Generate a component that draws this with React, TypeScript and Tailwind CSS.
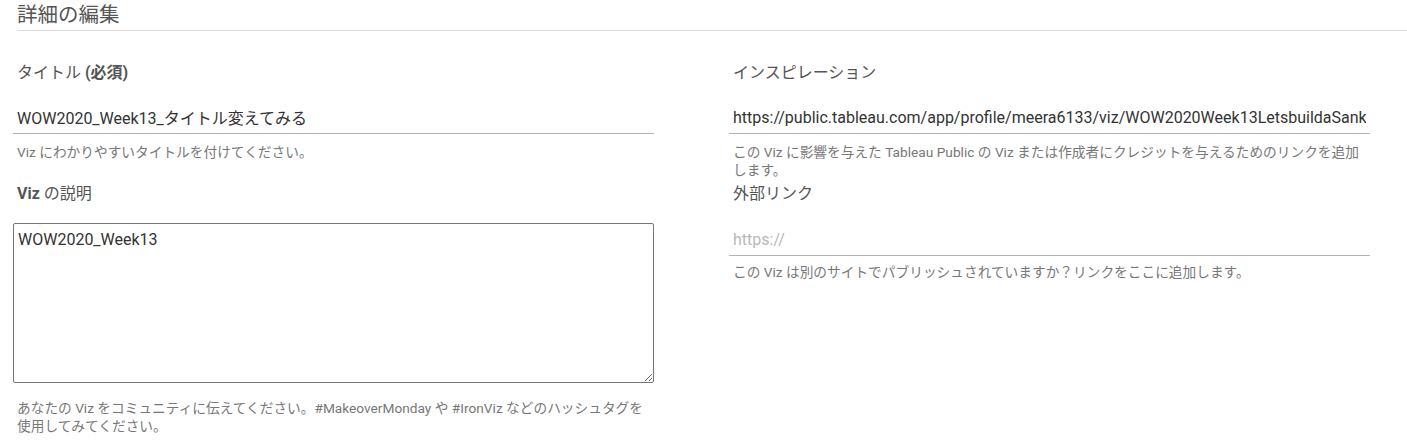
import React, { useState } from 'react';

const font = { fontFamily: 'Roboto, "Noto Sans CJK JP", sans-serif' };

// Underlined text field used for title and links
const LineInput: React.FC<{ value: string; placeholder?: string; onChange: (v: string) => void }> = ({
  value,
  placeholder,
  onChange,
}) => (
  <input
    type="text"
    value={value}
    placeholder={placeholder}
    onChange={(e) => onChange(e.target.value)}
    className="block w-full h-[29px] px-1 pb-[4px] bg-transparent border-b border-[#b3b3b3] text-[16px] text-[#333] outline-none placeholder:text-[#b8b8b8]"
    style={font}
  />
);

const App: React.FC = () => {
  const [title, setTitle] = useState('WOW2020_Week13_タイトル変えてみる');
  const [inspiration, setInspiration] = useState(
    'https://public.tableau.com/app/profile/meera6133/viz/WOW2020Week13LetsbuildaSankeyChart/Sankey'
  );
  const [description, setDescription] = useState('WOW2020_Week13');
  const [link, setLink] = useState('');

  return (
    <div className="w-[1407px] h-[445px] bg-white overflow-hidden" style={font}>
      {/* Section header */}
      <div className="ml-[17px] h-[31px] border-b border-[#ddd]">
        <h2 className="text-[20.5px] leading-[30px] text-[#555] font-normal">詳細の編集</h2>
      </div>

      <div className="grid grid-cols-[641px_641px] gap-x-[75px] gap-y-[5px] pl-[13px] mt-[32px]">
        {/* Title */}
        <div>
          <label className="block pl-1 text-[16px] leading-[20px] text-[#555]">
            タイトル <span className="font-bold">(必須)</span>
          </label>
          <div className="mt-[22px]">
            <LineInput value={title} onChange={setTitle} />
          </div>
          <p className="mt-[9px] pl-1 text-[13.7px] leading-[18px] text-[#777]">
            Viz にわかりやすいタイトルを付けてください。
          </p>
        </div>

        {/* Inspiration */}
        <div>
          <label className="block pl-1 text-[16px] leading-[20px] text-[#555]">インスピレーション</label>
          <div className="mt-[22px]">
            <LineInput value={inspiration} onChange={setInspiration} />
          </div>
          <p className="mt-[9px] pl-1 pr-1 text-[13.7px] leading-[18px] text-[#777]">
            この Viz に影響を与えた Tableau Public の Viz または作成者にクレジットを与えるためのリンクを追加します。
          </p>
        </div>

        {/* Description */}
        <div>
          <label className="block pl-1 text-[16px] leading-[20px] text-[#555]">
            <span className="font-bold">Viz</span> の説明
          </label>
          <textarea
            value={description}
            onChange={(e) => setDescription(e.target.value)}
            className="block mt-[19px] w-full h-[160px] px-1 pt-[5px] text-[16px] leading-[22px] text-[#333] border border-[#767676] rounded-[2px] outline-none"
            style={font}
          />
          <p className="mt-[16px] pl-1 pr-1 text-[13.7px] leading-[18px] text-[#777]">
            あなたの Viz をコミュニティに伝えてください。#MakeoverMonday や #IronViz などのハッシュタグを使用してみてください。
          </p>
        </div>

        {/* External link */}
        <div>
          <label className="block pl-1 text-[16px] leading-[20px] text-[#555]">外部リンク</label>
          <div className="mt-[23px]">
            <LineInput value={link} placeholder="https://" onChange={setLink} />
          </div>
          <p className="mt-[7px] pl-1 text-[13.7px] leading-[18px] text-[#777]">
            この Viz は別のサイトでパブリッシュされていますか？リンクをここに追加します。
          </p>
        </div>
      </div>
    </div>
  );
};

export default App;
